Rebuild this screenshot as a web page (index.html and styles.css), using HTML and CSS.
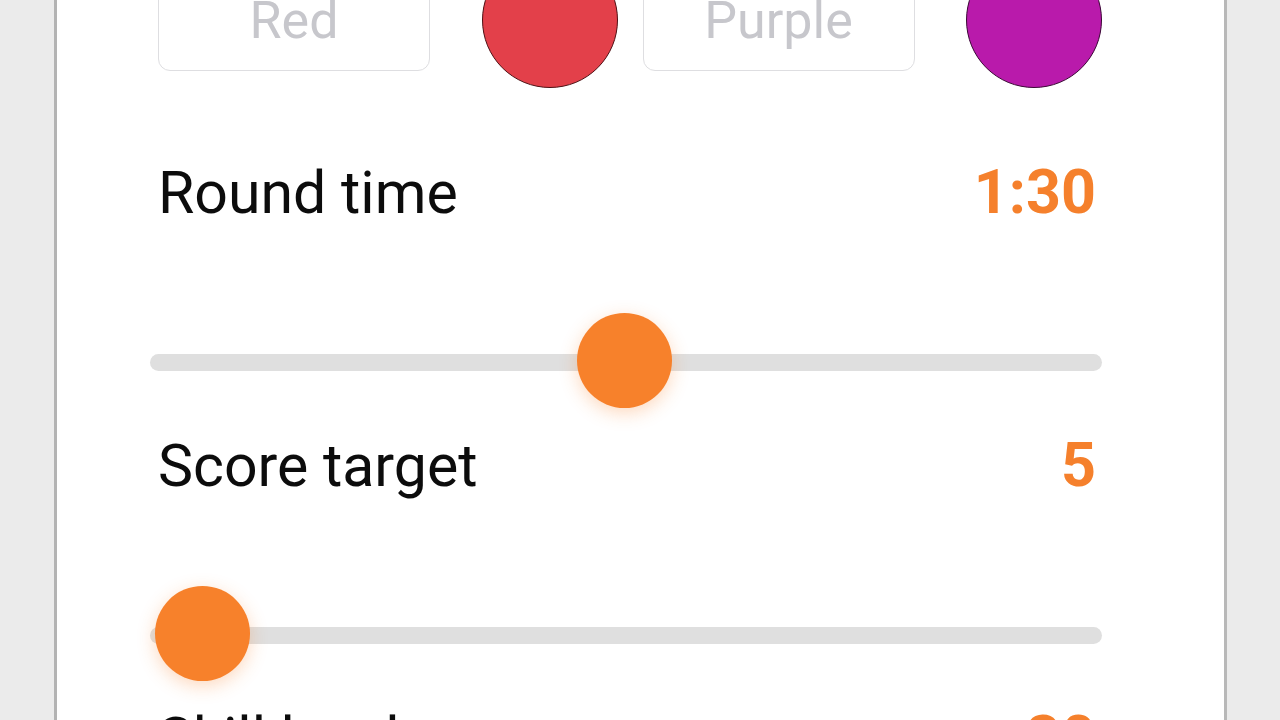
FILE: index.html
```html
<!DOCTYPE html>
<html lang="en">
<head>
<meta charset="utf-8">
<title>Game settings</title>
<link rel="stylesheet" href="styles.css">
</head>
<body>
<main class="panel">
  <section class="swatches">
    <div class="pair">
      <div class="field">Red</div>
      <div class="dot dot-red"></div>
    </div>
    <div class="pair">
      <div class="field">Purple</div>
      <div class="dot dot-purple"></div>
    </div>
  </section>

  <section class="setting">
    <div class="setting-head">
      <span class="label">Round time</span>
      <span class="value">1:30</span>
    </div>
    <div class="slider">
      <div class="track"></div>
      <div class="thumb" style="left: 427px"></div>
    </div>
  </section>

  <section class="setting">
    <div class="setting-head">
      <span class="label">Score target</span>
      <span class="value">5</span>
    </div>
    <div class="slider">
      <div class="track"></div>
      <div class="thumb" style="left: 5px"></div>
    </div>
  </section>

  <section class="setting">
    <div class="setting-head">
      <span class="label">Skill level</span>
      <span class="value">30</span>
    </div>
    <div class="slider">
      <div class="track"></div>
      <div class="thumb" style="left: 200px"></div>
    </div>
  </section>
</main>
</body>
</html>
```

FILE: styles.css
```css
html, body {
  margin: 0;
  padding: 0;
}

body {
  background: #ebebeb;
  width: 1280px;
  height: 720px;
  overflow: hidden;
  font-family: Roboto, "Noto Sans", sans-serif;
}

.panel {
  box-sizing: border-box;
  margin-left: 54px;
  width: 1173px;
  height: 720px;
  background: #ffffff;
  border-left: 3px solid #b3b3b3;
  border-right: 3px solid #b8b8b8;
  padding: 0 122px 0 101px;
  overflow: hidden;
}

.swatches {
  display: grid;
  grid-template-columns: 1fr 1fr;
  column-gap: 25px;
  margin-top: -48px;
}

.pair {
  display: flex;
  justify-content: space-between;
  align-items: center;
  height: 136px;
}

.field {
  box-sizing: border-box;
  width: 272px;
  height: 102px;
  border: 1px solid #dedee1;
  border-radius: 12px;
  color: #c7c7cc;
  font-size: 52px;
  line-height: 102px;
  text-align: center;
}

.dot {
  box-sizing: border-box;
  width: 136px;
  height: 136px;
  border-radius: 50%;
}

.dot-red {
  background: #e3404a;
  border: 1.5px solid #4e1014;
}

.dot-purple {
  background: #b91aab;
  border: 1.5px solid #3a0735;
}

.swatches + .setting {
  margin-top: 69px;
}

.setting-head {
  display: flex;
  justify-content: space-between;
  align-items: baseline;
  height: 70px;
  line-height: 70px;
  padding-right: 6px;
}

.label {
  font-size: 59px;
  font-weight: 400;
  color: #0c0c0c;
}

.value {
  font-size: 61px;
  font-weight: 700;
  color: #f5802c;
}

.slider {
  position: relative;
  height: 96px;
  margin: 88px 0 19px -8px;
}

.track {
  position: relative;
  top: 39px;
  height: 17px;
  border-radius: 9px;
  background: #dfdfdf;
}

.thumb {
  position: absolute;
  top: -2px;
  width: 95px;
  height: 95px;
  border-radius: 50%;
  background: #f7812b;
  box-shadow: 0 5px 18px rgba(247, 129, 43, 0.3);
}
```
